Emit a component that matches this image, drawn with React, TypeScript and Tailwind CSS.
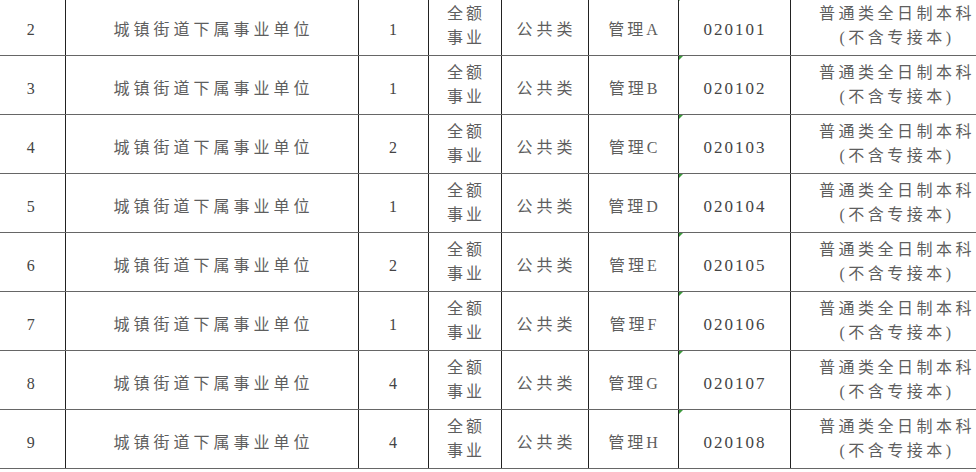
const rows = [
  { no: 2, count: 1, post: "A", code: "020101" },
  { no: 3, count: 1, post: "B", code: "020102" },
  { no: 4, count: 2, post: "C", code: "020103" },
  { no: 5, count: 1, post: "D", code: "020104" },
  { no: 6, count: 2, post: "E", code: "020105" },
  { no: 7, count: 1, post: "F", code: "020106" },
  { no: 8, count: 4, post: "G", code: "020107" },
  { no: 9, count: 4, post: "H", code: "020108" },
];

const cell =
  "flex flex-col items-center justify-center border-r-[1.5px] border-[#222] leading-[24px]";
const single = `${cell} pt-[7px]`;

export default function App() {
  return (
    <div
      className="w-[976px] h-[472px] overflow-hidden bg-white text-[#5e5e5e] text-[16px]"
      style={{ fontFamily: '"Liberation Serif", "Noto Sans CJK SC", serif' }}
    >
      <div className="-mt-[3px] -ml-[3px] w-[1010px]">
        {rows.map((r) => (
          <div
            key={r.no}
            className="grid h-[59px] grid-cols-[68.5px_293px_70px_73px_87px_90px_112px_210.5px] border-b-[1.5px] border-[#666]"
          >
            <div className={`${single} text-[#444]`}>{r.no}</div>
            <div className={`${single} tracking-[4px] pl-[4px]`}>城镇街道下属事业单位</div>
            <div className={`${single} text-[#444]`}>{r.count}</div>
            <div className={`${cell} tracking-[3px] pl-[3px]`}>
              <span>全额</span>
              <span>事业</span>
            </div>
            <div className={`${single} tracking-[4px] pl-[4px]`}>公共类</div>
            <div className={`${single} tracking-[3px] pl-[3px]`}>管理{r.post}</div>
            <div className={`${single} relative tracking-[2px] pl-[2px] text-[17px] text-[#444]`}>
              <span className="absolute left-0 top-0 h-0 w-0 border-t-[4px] border-r-[4px] border-t-[#3c9a3c] border-r-transparent" />
              {r.code}
            </div>
            <div className={`${cell} tracking-[3.5px] pl-[3.5px]`}>
              <span>普通类全日制本科</span>
              <span>(不含专接本)</span>
            </div>
          </div>
        ))}
      </div>
    </div>
  );
}
